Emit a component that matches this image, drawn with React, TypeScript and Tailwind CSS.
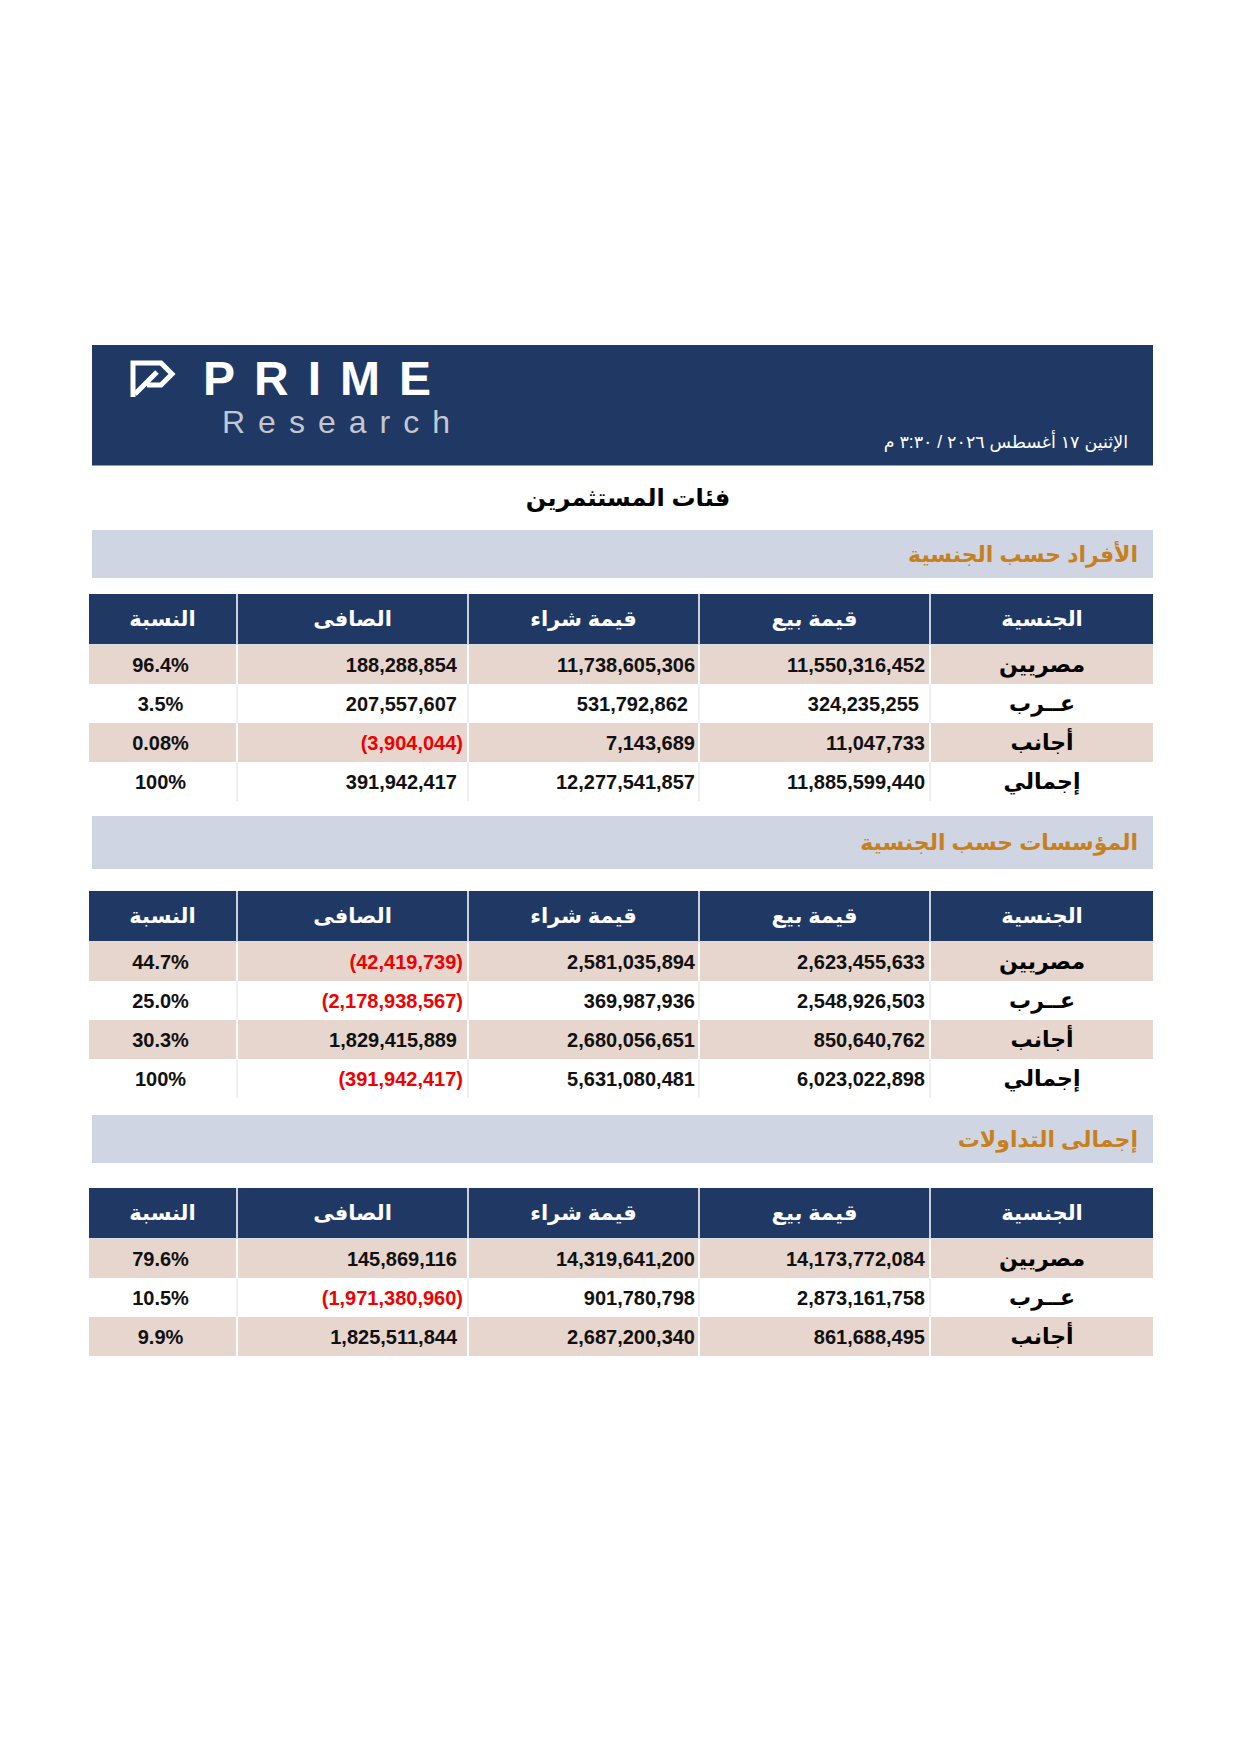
import React from 'react';

type Row = {
    name: string;
    sell: string;
    buy: string;
    net: string;
    pct: string;
    wide?: boolean;
};

type Section = {
    title: string;
    rows: Row[];
    top: string;
    bar: string;
    gap: string;
};

const sections: Section[] = [
    {
        title: 'الأفراد حسب الجنسية',
        top: 'mt-0',
        bar: 'h-[48px]',
        gap: 'mt-[16px]',
        rows: [
            { name: 'مصريين', sell: '11,550,316,452', buy: '11,738,605,306', net: '188,288,854', pct: '96.4%' },
            { name: 'عــرب', sell: '324,235,255', buy: '531,792,862', net: '207,557,607', pct: '3.5%', wide: true },
            { name: 'أجانب', sell: '11,047,733', buy: '7,143,689', net: '(3,904,044)', pct: '0.08%' },
            { name: 'إجمالي', sell: '11,885,599,440', buy: '12,277,541,857', net: '391,942,417', pct: '100%' },
        ],
    },
    {
        title: 'المؤسسات حسب الجنسية',
        top: 'mt-[15px]',
        bar: 'h-[53px]',
        gap: 'mt-[22px]',
        rows: [
            { name: 'مصريين', sell: '2,623,455,633', buy: '2,581,035,894', net: '(42,419,739)', pct: '44.7%' },
            { name: 'عــرب', sell: '2,548,926,503', buy: '369,987,936', net: '(2,178,938,567)', pct: '25.0%' },
            { name: 'أجانب', sell: '850,640,762', buy: '2,680,056,651', net: '1,829,415,889', pct: '30.3%' },
            { name: 'إجمالي', sell: '6,023,022,898', buy: '5,631,080,481', net: '(391,942,417)', pct: '100%' },
        ],
    },
    {
        title: 'إجمالى التداولات',
        top: 'mt-[17px]',
        bar: 'h-[48px]',
        gap: 'mt-[25px]',
        rows: [
            { name: 'مصريين', sell: '14,173,772,084', buy: '14,319,641,200', net: '145,869,116', pct: '79.6%' },
            { name: 'عــرب', sell: '2,873,161,758', buy: '901,780,798', net: '(1,971,380,960)', pct: '10.5%' },
            { name: 'أجانب', sell: '861,688,495', buy: '2,687,200,340', net: '1,825,511,844', pct: '9.9%' },
        ],
    },
];

const headers = ['الجنسية', 'قيمة بيع', 'قيمة شراء', 'الصافى', 'النسبة'];

function Logo() {
    return (
        <svg width="46" height="38" viewBox="0 0 46 38" className="mt-[5px] shrink-0">
            <path
                d="M3 37 V3 H31 L42 14 L31 25 H17"
                fill="none"
                stroke="white"
                strokeWidth="5"
                strokeLinejoin="miter"
            />
            <path d="M27 12 L5 34" fill="none" stroke="white" strokeWidth="5" />
        </svg>
    );
}

function DataRow({ row, shaded }: { row: Row; shaded: boolean }) {
    const bg = shaded ? 'bg-[#e7d6ce]' : 'bg-white';
    const line = shaded ? 'border-white' : 'border-[#efefef]';
    const neg = row.net.startsWith('(');

    return (
        <div className={`grid grid-cols-[224px_231px_231px_231px_147px] h-[39px] ${bg}`}>
            <div className={`flex items-center justify-center border-l-2 ${line} text-[22px] font-bold text-black`}>
                {row.name}
            </div>
            <div className={`flex items-center justify-start border-l-2 ${line} ${row.wide ? 'pr-[10px]' : 'pr-[4px]'} text-[20px] font-bold text-[#111]`}>
                <span dir="ltr">{row.sell}</span>
            </div>
            <div className={`flex items-center justify-start border-l-2 ${line} ${row.wide ? 'pr-[10px]' : 'pr-[3px]'} text-[20px] font-bold text-[#111]`}>
                <span dir="ltr">{row.buy}</span>
            </div>
            <div className={`flex items-center justify-start border-l-2 ${line} ${neg ? 'pr-[4px] text-[#f00000]' : 'pr-[10px] text-[#111]'} text-[20px] font-bold`}>
                <span dir="ltr">{row.net}</span>
            </div>
            <div className="flex items-center justify-center pr-[4px] text-[20px] font-bold text-[#111]">
                <span dir="ltr">{row.pct}</span>
            </div>
        </div>
    );
}

export default function App() {
    return (
        <div className="min-h-[1754px] w-[1240px] bg-white font-['Liberation_Sans','DejaVu_Sans',sans-serif]">
            <div className="ml-[89px] w-[1064px] pt-[345px]">
                {/* Header banner */}
                <div className="ml-[3px] h-[121px] bg-[#203864] border-b border-[#8d9bb3] flex justify-between items-end">
                    <div className="self-start pl-[38px] pt-[10px]">
                        <div className="flex items-start gap-[27px]">
                            <Logo />
                            <span className="text-[48px] leading-none font-bold text-white tracking-[19px]">PRIME</span>
                        </div>
                        <div className="mt-[3px] pl-[92px] text-[32px] leading-none text-[#c3c7cf] tracking-[13px]">Research</div>
                    </div>
                    <div dir="rtl" className="pr-[25px] pb-[10px] text-[17.5px] text-white">
                        الإثنين ١٧ أغسطس ٢٠٢٦ / ٣:٣٠ م
                    </div>
                </div>

                {/* Title */}
                <div dir="rtl" className="h-[64px] flex items-center justify-center pl-[14px] text-[24px] font-bold text-black">
                    فئات المستثمرين
                </div>

                {sections.map((section) => (
                    <div key={section.title} className={section.top}>
                        <div dir="rtl" className={`ml-[3px] ${section.bar} bg-[#cfd5e2] flex items-center pr-[15px] text-[22px] font-bold text-[#c8801e]`}>
                            {section.title}
                        </div>

                        <div dir="rtl" className={section.gap}>
                            <div className="grid grid-cols-[224px_231px_231px_231px_147px] h-[51px] bg-[#203864] border-b border-[#d8dde6]">
                                {headers.map((h, i) => (
                                    <div
                                        key={h}
                                        className={`flex items-center justify-center text-[21px] font-bold text-white ${i < 4 ? 'border-l-2 border-[#c9d0dc]' : ''}`}
                                    >
                                        {h}
                                    </div>
                                ))}
                            </div>
                            {section.rows.map((row, i) => (
                                <DataRow key={row.name} row={row} shaded={i % 2 === 0} />
                            ))}
                        </div>
                    </div>
                ))}
            </div>
        </div>
    );
}
